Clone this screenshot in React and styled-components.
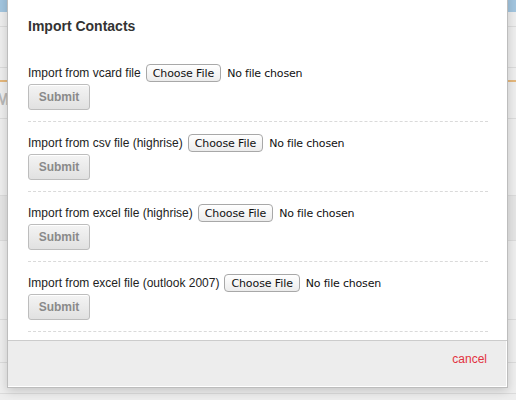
import React from "react";
import styled, { createGlobalStyle } from "styled-components";

const GlobalStyle = createGlobalStyle`
  html, body {
    margin: 0;
    padding: 0;
    height: 400px;
    overflow: hidden;
    background: #fff;
    font-family: "Liberation Sans", Arial, sans-serif;
  }
`;

const imports = [
  "Import from vcard file",
  "Import from csv file (highrise)",
  "Import from excel file (highrise)",
  "Import from excel file (outlook 2007)",
];

const App = () => {
  return (
    <Screen>
      <GlobalStyle />
      <Backdrop>
        <TopBar />
        <BackRow $h={14} />
        <BackRow $h={40} />
        <BackRow $h={12} $accent />
        <BackRow $h={36}>
          <BackLetter>M</BackLetter>
        </BackRow>
        <BackRow $h={76} />
        <BackRow $h={44} $shade />
        <BackRow $h={78} />
        <BackRow $h={42} />
        <BackRow $h={30} />
      </Backdrop>

      <Modal>
        <ModalBody>
          <Title>Import Contacts</Title>
          {imports.map((label) => (
            <ImportForm key={label} onSubmit={(e) => e.preventDefault()}>
              <FieldLine>
                <Label>{label}</Label>
                <FilePicker>
                  <HiddenInput type="file" />
                  <ChooseButton>Choose File</ChooseButton>
                  <FileName>No file chosen</FileName>
                </FilePicker>
              </FieldLine>
              <SubmitButton type="submit" disabled>
                Submit
              </SubmitButton>
            </ImportForm>
          ))}
        </ModalBody>
        <Footer>
          <CancelLink href="#">cancel</CancelLink>
        </Footer>
      </Modal>
    </Screen>
  );
};

export default App;

const Screen = styled.div`
  position: relative;
  width: 516px;
  height: 400px;
  overflow: hidden;
`;

const Backdrop = styled.div`
  display: flex;
  flex-direction: column;
  height: 400px;
  background: #eeeeee;
`;

const TopBar = styled.div`
  height: 12px;
  background: #a3c6e0;
`;

const BackRow = styled.div`
  height: ${(p) => p.$h}px;
  border-bottom: ${(p) => (p.$accent ? "2px solid #e6b87c" : "1px solid #dcdcdc")};
  background: ${(p) => (p.$shade ? "#e6e6e6" : "#efefef")};
  display: flex;
  align-items: center;
`;

const BackLetter = styled.span`
  font-size: 16px;
  font-weight: bold;
  color: #b8b8b8;
  margin-left: -4px;
`;

const Modal = styled.div`
  position: absolute;
  left: 7px;
  top: -10px;
  width: 499px;
  background: #fff;
  border: 1px solid #bdbdbd;
  box-shadow: 0 3px 10px rgba(0, 0, 0, 0.18);
`;

const ModalBody = styled.div`
  display: flex;
  flex-direction: column;
  padding: 25px 19px 8px 20px;
`;

const Title = styled.h3`
  margin: 0 0 28px;
  font-size: 14px;
  line-height: 20px;
  font-weight: bold;
  color: #333;
`;

const ImportForm = styled.form`
  display: flex;
  flex-direction: column;
  align-items: flex-start;
  gap: 2px;
  padding-bottom: 11px;
  margin-bottom: 12px;
  border-bottom: 1px dashed #dadada;
  align-self: stretch;

  &:last-child {
    margin-bottom: 0;
  }
`;

const FieldLine = styled.div`
  display: flex;
  align-items: center;
  height: 18px;
`;

const Label = styled.span`
  font-size: 12px;
  color: #222;
  margin-right: 5px;
`;

const FilePicker = styled.label`
  display: flex;
  align-items: center;
  gap: 6px;
`;

const HiddenInput = styled.input`
  display: none;
`;

const ChooseButton = styled.span`
  display: inline-flex;
  align-items: center;
  justify-content: center;
  box-sizing: border-box;
  height: 18px;
  padding: 0 6px;
  border: 1px solid #a8a8a8;
  border-radius: 4px;
  background: linear-gradient(#ffffff, #ececec);
  font-family: "DejaVu Sans", "Liberation Sans", sans-serif;
  font-size: 11px;
  letter-spacing: -0.1px;
  color: #111;
`;

const FileName = styled.span`
  font-family: "DejaVu Sans", "Liberation Sans", sans-serif;
  font-size: 11px;
  letter-spacing: -0.2px;
  color: #111;
`;

const SubmitButton = styled.button`
  box-sizing: border-box;
  width: 62px;
  height: 26px;
  padding: 0;
  border: 1px solid #bdbdbd;
  border-radius: 3px;
  background: linear-gradient(#f4f4f4, #e1e1e1);
  box-shadow: inset 0 1px 0 #fff;
  font-family: "Liberation Sans", Arial, sans-serif;
  font-size: 12px;
  font-weight: bold;
  color: #8a8a8a;
`;

const Footer = styled.div`
  display: flex;
  justify-content: flex-end;
  align-items: center;
  box-sizing: border-box;
  height: 47px;
  padding: 0 20px 10px;
  background: #ededed;
  border-top: 1px solid #cccccc;
  box-shadow: inset 0 -1px 0 #fff, inset -1px 0 0 #fff;
`;

const CancelLink = styled.a`
  font-size: 12px;
  color: #e2323f;
  text-decoration: none;
`;
